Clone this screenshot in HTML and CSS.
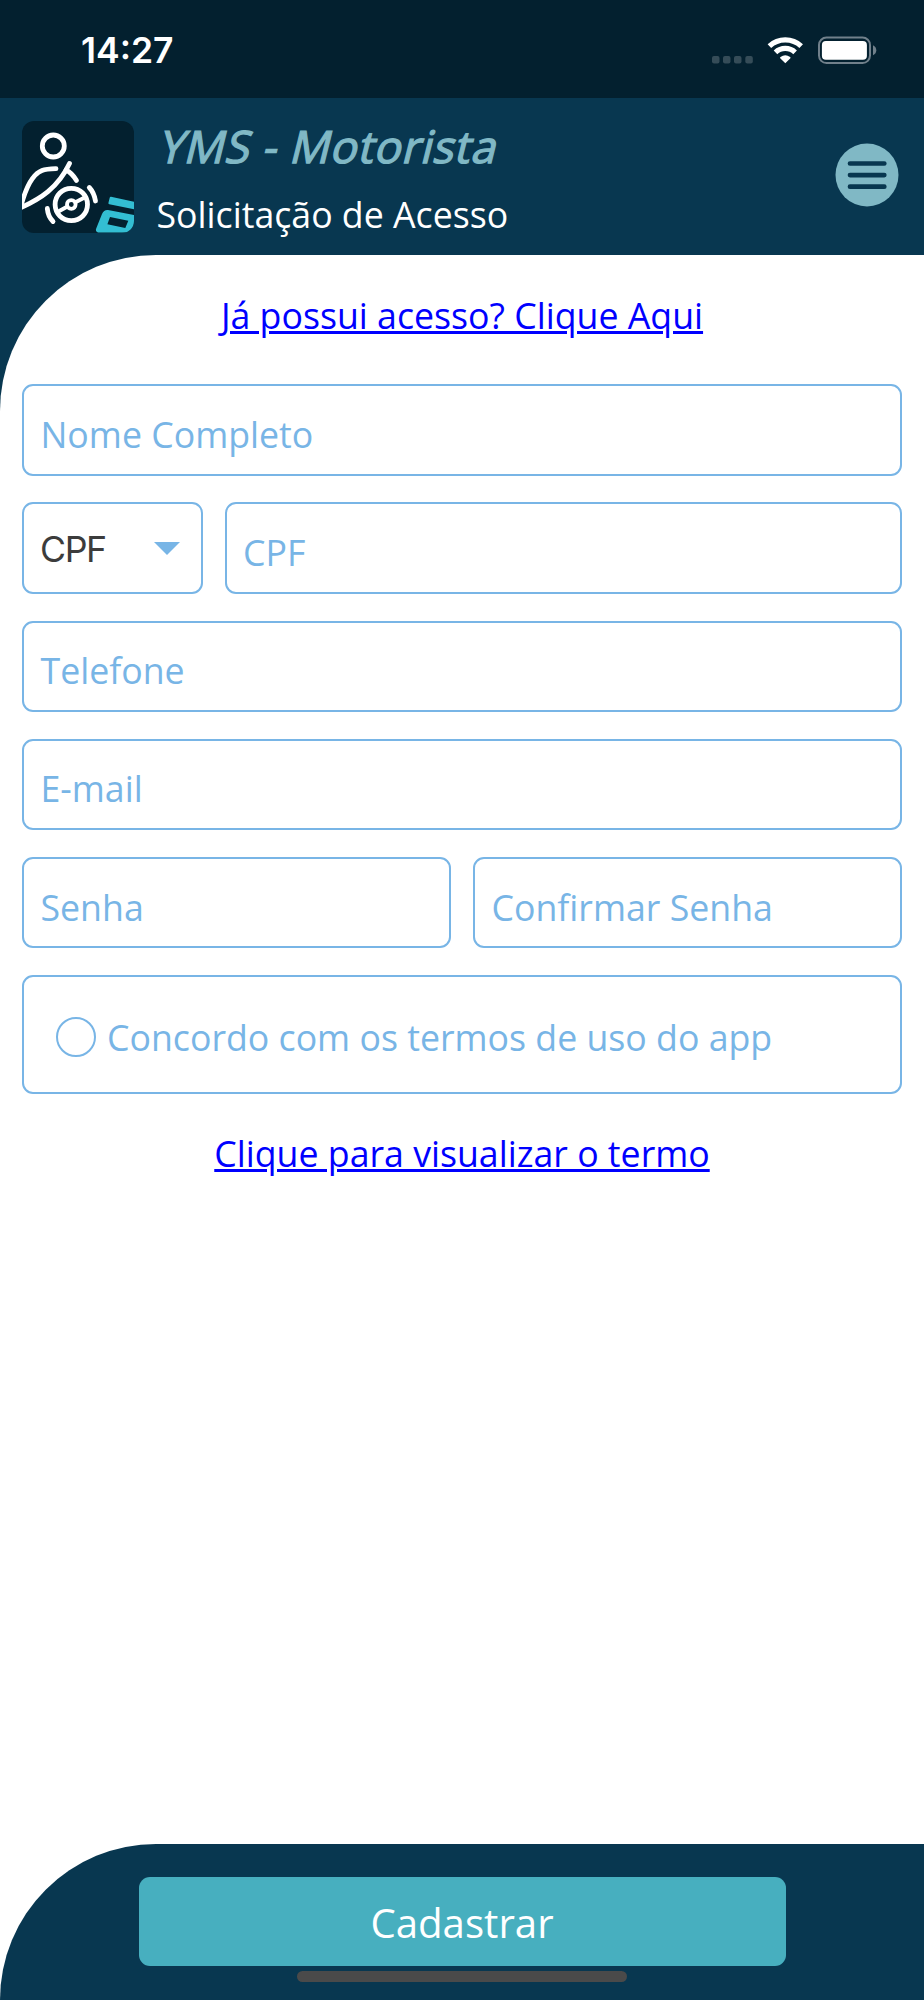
FILE: index.html
```html
<!DOCTYPE html>
<html lang="pt-BR">
<head>
<meta charset="utf-8">
<title>YMS - Motorista</title>
<link rel="stylesheet" href="styles.css">
</head>
<body>
<div class="screen">
  <div class="status">
    <span class="time">14:27</span>
    <svg class="status-icons" width="170" height="34" viewBox="0 0 170 34">
      <g fill="#fff" fill-opacity=".2">
        <rect x="2" y="21" width="7.5" height="7.5" rx="2"/><rect x="13" y="21" width="7.5" height="7.5" rx="2"/><rect x="24" y="21" width="7.5" height="7.5" rx="2"/><rect x="35.3" y="21" width="7.5" height="7.5" rx="2"/>
      </g>
      <g fill="none" stroke="#fff" stroke-width="5.2">
        <path d="M59.4 11.2A23.4 23.4 0 0 1 91.2 11.2"/>
        <path d="M65.5 17.3A14.2 14.2 0 0 1 85.1 17.3"/>
      </g>
      <path fill="#fff" d="M75.3 28.3L70.2 23.2Q69.8 22.6 70.5 22.1A7.6 7.6 0 0 1 80.1 22.1Q80.8 22.6 80.4 23.2Z"/>
      <rect x="109" y="2.5" width="51" height="25.6" rx="7.5" fill="none" stroke="#71808b" stroke-width="2"/>
      <rect x="111.9" y="6" width="45" height="18.8" rx="4" fill="#fff"/>
      <path fill="#71808b" d="M163 10.3Q166.3 12 166.3 15.3Q166.3 18.7 163 20.3Z"/>
    </svg>
  </div>
  <header class="header">
    <svg class="logo" width="112" height="112" viewBox="0 0 112 112">
      <rect width="112" height="112" fill="#03202f"/>
      <g fill="none" stroke="#fff" stroke-width="4.8" stroke-linecap="round" stroke-linejoin="round">
        <circle cx="31.3" cy="25" r="11"/>
        <path d="M-1 85C4 66 11 53 20 49.5Q24 48 34 47.7"/>
        <path d="M-2 87C18 78 36 67 47.5 42.5"/>
        <path d="M44 49Q50 52 54.5 59.5"/>
        <circle cx="49.3" cy="83.5" r="16.2"/>
        <circle cx="49.3" cy="83.5" r="4.3" stroke-width="3.8"/>
        <path d="M53.5 81.2L63.5 76M45 85.8L35.5 91" stroke-width="4"/>
        <path d="M67.3 66.5Q72 71.5 73.5 80M25.3 87.5Q26 95.5 31 100.5"/>
      </g>
      <path fill="#33bed3" d="M89 75.7L112 80.7V88.3L87.3 83.3Q86 83 86.5 81.5L87.7 76.7Q88 75.5 89 75.7Z"/>
      <path fill="#33bed3" fill-rule="evenodd" d="M86 89L112 94V104Q111 109 107 111.4H76Q73 110.5 74.2 107.5L80 93Q82 88.5 86 89ZM88 96L85.4 103.3L103.3 107L106.3 99.8Z"/>
    </svg>
    <div class="titles">
      <h1 class="title">YMS - Motorista</h1>
      <div class="subtitle">Solicitação de Acesso</div>
    </div>
    <svg class="menu" width="64" height="64" viewBox="0 0 64 64">
      <circle cx="32" cy="32" r="31.5" fill="#80b8c5"/>
      <path d="M15 20.5H49.3M15 32.1H49.3M15 43.7H49.3" stroke="#083750" stroke-width="4.7" stroke-linecap="round"/>
    </svg>
  </header>
  <div class="main-wrap">
    <main class="main">
      <a class="link" href="#">Já possui acesso? Clique Aqui</a>
      <form class="form">
        <div class="field">Nome Completo</div>
        <div class="row">
          <div class="select">CPF<svg width="28" height="14" viewBox="0 0 28 14"><path d="M1 0H27L14 13Z" fill="#78b5e6"/></svg></div>
          <div class="field">CPF</div>
        </div>
        <div class="field">Telefone</div>
        <div class="field">E-mail</div>
        <div class="row">
          <div class="field">Senha</div>
          <div class="field">Confirmar Senha</div>
        </div>
        <div class="terms"><span class="radio"></span><span class="terms-text">Concordo com os termos de uso do app</span></div>
      </form>
      <a class="link" href="#">Clique para visualizar o termo</a>
    </main>
  </div>
  <footer class="footer">
    <div class="submit">Cadastrar</div>
    <div class="home-bar"></div>
  </footer>
</div>
</body>
</html>
```

FILE: styles.css
```css
* { box-sizing: border-box; }
body { margin: 0; }
.screen {
  width: 924px;
  height: 2000px;
  display: flex;
  flex-direction: column;
  background: #fff;
  font-family: "Open Sans", "Noto Sans", sans-serif;
  font-size: 35.7px;
  font-kerning: none;
}
.status {
  height: 98px;
  background: #03202f;
  display: flex;
  justify-content: space-between;
  align-items: flex-start;
  padding: 29px 44px 0 81px;
}
.time {
  font: 600 35.5px/44px Inter, sans-serif;
  color: #fff;
}
.status-icons { margin-top: 6px; }
.header {
  height: 156.5px;
  background: #083750;
  display: flex;
  align-items: flex-start;
  padding: 23px 25px 0 22px;
}
.logo { border-radius: 12px; }
.titles {
  flex: 1;
  padding-left: 22.5px;
}
.title {
  margin: -5px 0 0;
  padding-left: 4.5px;
  font-size: 44.6px;
  font-weight: 400;
  letter-spacing: .65px;
  -webkit-text-stroke: 1.3px #80b8c5;
  line-height: 60px;
  color: #80b8c5;
  transform: skewX(-14deg);
}
.subtitle {
  margin-top: 12px;
  line-height: 52px;
  color: #fff;
}
.menu { margin-top: 21.5px; }
.main-wrap {
  flex: 1;
  background: linear-gradient(#083750 200px, #fff 200px);
}
.main {
  height: 100%;
  background: #fff;
  border-top-left-radius: 156px;
  padding: 34.5px 22px 0;
  display: flex;
  flex-direction: column;
}
.link {
  align-self: center;
  line-height: 52px;
  color: #00f;
  text-decoration: underline;
}
.form {
  margin: 43.2px 0 33.7px;
  display: flex;
  flex-direction: column;
  gap: 26.7px;
}
.row {
  display: flex;
  gap: 22px;
}
.field, .select, .terms {
  border: 2px solid #78b5e6;
  border-radius: 11px;
  color: #78b5e6;
}
.field {
  flex: 1 0 auto;
  height: 91.5px;
  line-height: 87px;
  padding: 4.6px 16.5px 0;
}
.row .field { flex: 1; }
.select {
  width: 180.5px;
  height: 91.5px;
  display: flex;
  align-items: center;
  justify-content: space-between;
  padding: 2px 20px 0 16px;
  font-family: Inter, sans-serif;
  letter-spacing: -1.4px;
  color: #3c3c3c;
}
.terms {
  height: 118.5px;
  display: flex;
  align-items: center;
  padding: 4.5px 32px 0;
}
.radio {
  width: 40px;
  height: 40px;
  border: 2px solid #78b5e6;
  border-radius: 50%;
  margin-right: 11px;
}
.footer {
  height: 156.5px;
  background: #083750;
  border-top-left-radius: 156px;
  padding-top: 33.5px;
  display: flex;
  flex-direction: column;
  align-items: center;
  gap: 5px;
}
.submit {
  width: 647px;
  height: 89px;
  border-radius: 11px;
  background: #47afbf;
  color: #fff;
  font-size: 40.2px;
  line-height: 91px;
  text-align: center;
}
.home-bar {
  width: 330px;
  height: 11px;
  border-radius: 6px;
  background: #4a4a4a;
}
```
